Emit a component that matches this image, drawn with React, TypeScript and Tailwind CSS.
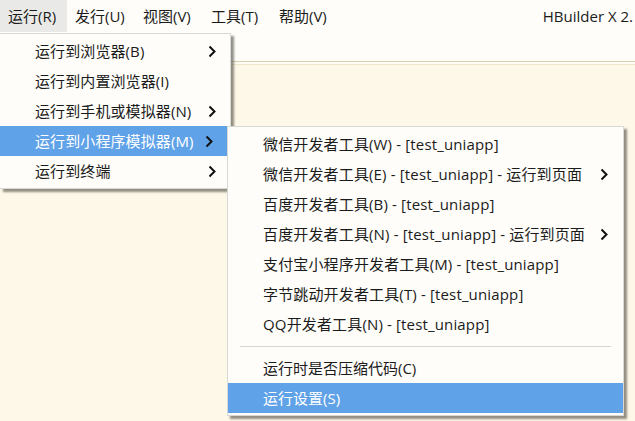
const font = "font-['Segoe_UI','Open_Sans','Noto_Sans_CJK_SC',sans-serif]";

const menubar = ["运行(R)", "发行(U)", "视图(V)", "工具(T)", "帮助(V)"];

const runMenu = [
  { label: "运行到浏览器(B)", sub: true },
  { label: "运行到内置浏览器(I)", sub: false },
  { label: "运行到手机或模拟器(N)", sub: true },
  { label: "运行到小程序模拟器(M)", sub: true, active: true },
  { label: "运行到终端", sub: true },
];

const miniMenu = [
  { label: "微信开发者工具(W) - [test_uniapp]" },
  { label: "微信开发者工具(E) - [test_uniapp] - 运行到页面", sub: true },
  { label: "百度开发者工具(B) - [test_uniapp]" },
  { label: "百度开发者工具(N) - [test_uniapp] - 运行到页面", sub: true },
  { label: "支付宝小程序开发者工具(M) - [test_uniapp]" },
  { label: "字节跳动开发者工具(T) - [test_uniapp]" },
  { label: "QQ开发者工具(N) - [test_uniapp]" },
];

function Chevron() {
  return (
    <svg width="8" height="13" viewBox="0 0 8 13" className="shrink-0">
      <polyline points="1.5,1.5 6.5,6.5 1.5,11.5" fill="none" stroke="#111" strokeWidth="2" />
    </svg>
  );
}

export default function App() {
  return (
    <div className={`relative w-[635px] h-[421px] overflow-hidden bg-[#fdf8e8] text-[15px] text-[#1b1b1b] ${font}`}>
      {/* menubar */}
      <div className="flex h-[32px] items-center bg-[#fefdf9]">
        {menubar.map((m, i) => (
          <div
            key={m}
            className={`flex h-full items-center px-2 ${i === 0 ? "bg-[#e9e9e7] w-[67px]" : "w-[68px]"}`}
          >
            {m}
          </div>
        ))}
        <div className="ml-auto pr-[2px] whitespace-nowrap">HBuilder X 2.</div>
      </div>
      {/* toolbar */}
      <div className="h-[30px] bg-[#fefdf9] border-b border-[#dccfae]" />
      <div className="h-[3px] bg-[#fefcf4] border-b border-[#efe6cc]" />

      {/* run menu */}
      <div className="absolute left-0 top-[33px] w-[231px] bg-[#fefdf9] border border-l-0 border-[#d8d8d6] py-[2px] shadow-[3px_3px_2px_rgba(60,55,45,0.55)]">
        {runMenu.map((it) => (
          <div
            key={it.label}
            className={`flex h-[30px] items-center pl-[35px] pr-[14px] ${it.active ? "bg-[#5fa2e8] text-white mr-[3px] pr-[11px]" : ""}`}
          >
            <span className="flex-1 whitespace-nowrap tracking-[0.1px]">{it.label}</span>
            {it.sub && <Chevron />}
          </div>
        ))}
      </div>

      {/* mini program submenu */}
      <div className="absolute left-[227px] top-[126px] w-[397px] bg-[#fefdf9] border border-[#d8d8d6] py-[2px] shadow-[3px_3px_2px_rgba(60,55,45,0.55)]">
        {miniMenu.map((it) => (
          <div key={it.label} className="flex h-[30px] items-center pl-[35px] pr-[15px]">
            <span className="flex-1 whitespace-nowrap tracking-[0.15px]">{it.label}</span>
            {it.sub && <Chevron />}
          </div>
        ))}
        <div className="flex h-[14px] items-center px-[12px]">
          <div className="h-px w-full bg-[#d4d4d2]" />
        </div>
        <div className="flex h-[30px] items-center pl-[35px]">运行时是否压缩代码(C)</div>
        <div className="flex h-[30px] items-center pl-[35px] bg-[#5fa2e8] text-white">运行设置(S)</div>
      </div>
    </div>
  );
}
